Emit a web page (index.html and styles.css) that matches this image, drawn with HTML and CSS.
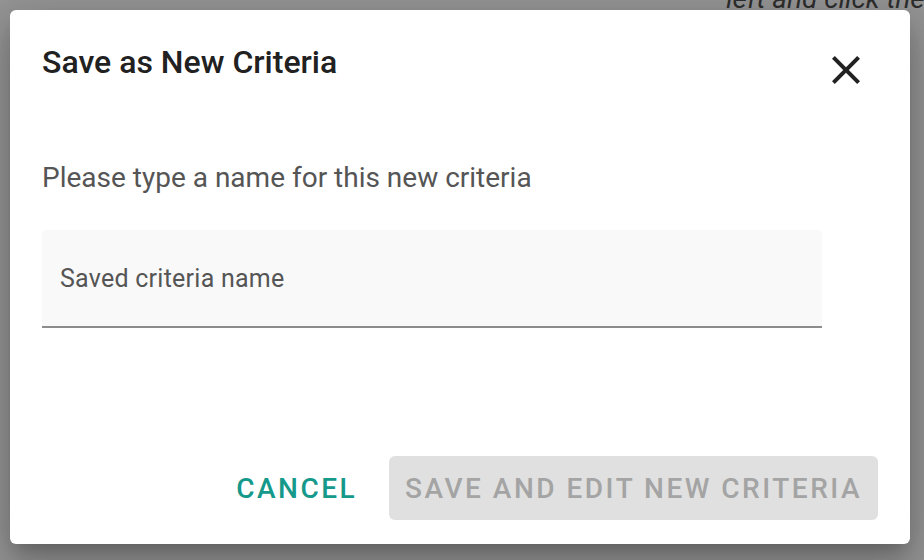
FILE: index.html
```html
<!DOCTYPE html>
<html lang="en">
<head>
    <meta charset="UTF-8">
    <meta name="viewport" content="width=device-width, initial-scale=1.0">
    <title>Save as New Criteria</title>
    <link rel="stylesheet" href="styles.css">
</head>
<body>

<div class="page-hint">left and click the</div>

<div class="dialog">
    <div class="dialog-head">
        <h2>Save as New Criteria</h2>
        <button class="close-btn" aria-label="Close">
            <svg viewBox="0 0 24 24" width="48" height="48"><path d="M19 6.41L17.59 5 12 10.59 6.41 5 5 6.41 10.59 12 5 17.59 6.41 19 12 13.41 17.59 19 19 17.59 13.41 12z" fill="#222"/></svg>
        </button>
    </div>
    <p class="dialog-text">Please type a name for this new criteria</p>
    <div class="field">
        <label>Saved criteria name</label>
    </div>
    <div class="actions">
        <button class="btn-cancel">Cancel</button>
        <button class="btn-save" disabled>Save and edit new criteria</button>
    </div>
</div>

</body>
</html>
```

FILE: styles.css
```css
* {box-sizing: border-box; margin: 0; padding: 0;}
body {background-color: #959595; font-family: Roboto, "Liberation Sans", sans-serif; width: 924px; height: 560px; overflow: hidden; position: relative;}
.page-hint {position: absolute; top: -17px; left: 726px; font-style: italic; font-size: 28px; line-height: 32px; color: #2e2e2e; white-space: nowrap;}
.dialog {position: relative; margin: 10px; width: 900px; height: 534px; background-color: #fff; border-radius: 6px; padding: 34px 32px 24px 32px; display: flex; flex-direction: column; box-shadow: 0 11px 15px -7px rgba(0, 0, 0, 0.2), 0 24px 38px 3px rgba(0, 0, 0, 0.14), 0 9px 46px 8px rgba(0, 0, 0, 0.12);}
.dialog-head {display: flex; justify-content: space-between; align-items: flex-start;}
.dialog-head h2 {font-size: 32px; font-weight: 500; line-height: 36px; color: #212121;}
.close-btn {background: none; border: none; width: 48px; height: 48px; margin-top: 2px; margin-right: 8px; cursor: pointer;}
.close-btn svg {display: block;}
.dialog-text {margin-top: 66px; font-size: 28px; line-height: 36px; color: #555;}
.field {margin-top: 34px; width: 780px; height: 98px; background-color: #f9f9f9; border-radius: 4px 4px 0 0; border-bottom: 2px solid #8c8c8c; padding: 34px 18px 0 18px;}
.field label {display: block; font-size: 25px; line-height: 30px; letter-spacing: 0.25px; color: #555;}
.actions {margin-top: auto; display: flex; justify-content: flex-end; gap: 24px;}
.actions button {font-family: Roboto, "Liberation Sans", sans-serif; font-size: 28px; font-weight: 500; letter-spacing: 2.5px; text-transform: uppercase; height: 64px; border: none; border-radius: 6px; cursor: pointer;}
.btn-cancel {background: none; color: #15998a; padding: 0 8px;}
.btn-save {background-color: #e0e0e0; color: #a4a4a4; padding: 0 16px; cursor: default;}
```
